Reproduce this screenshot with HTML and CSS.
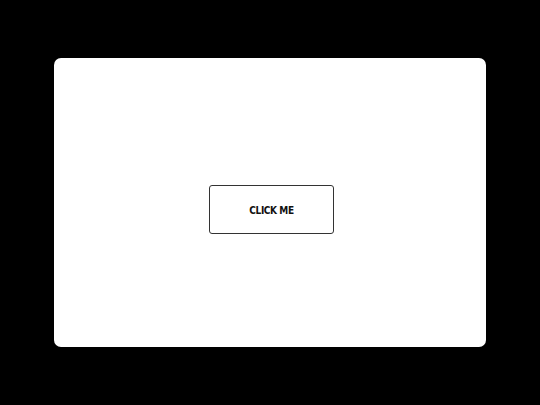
FILE: index.html
```html
<!DOCTYPE html>
<html>
<head>
<meta charset="utf-8">
<link rel="stylesheet" href="styles.css">
</head>
<body>
<div class="card">
  <button class="btn">CLICK ME</button>
</div>
</body>
</html>
```
FILE: styles.css
```css
html, body { margin: 0; padding: 0; background: #000; }
body {
  width: 540px; height: 405px;
  display: flex; align-items: center; justify-content: center;
}
.card {
  width: 432px; height: 289px;
  box-sizing: border-box;
  background: #fff;
  border-radius: 7px;
  display: flex; justify-content: center; align-items: flex-start;
  padding: 127px 0 0 3px;
}
.btn {
  width: 125px; height: 49px;
  box-sizing: border-box;
  background: #fff;
  border: 1px solid #333;
  border-radius: 3px;
  font-family: "DejaVu Sans Condensed", "DejaVu Sans", sans-serif;
  font-weight: bold;
  font-size: 10px;
  color: #111;
  padding: 1px 0 0 0;
  letter-spacing: -0.4px;
}
```
